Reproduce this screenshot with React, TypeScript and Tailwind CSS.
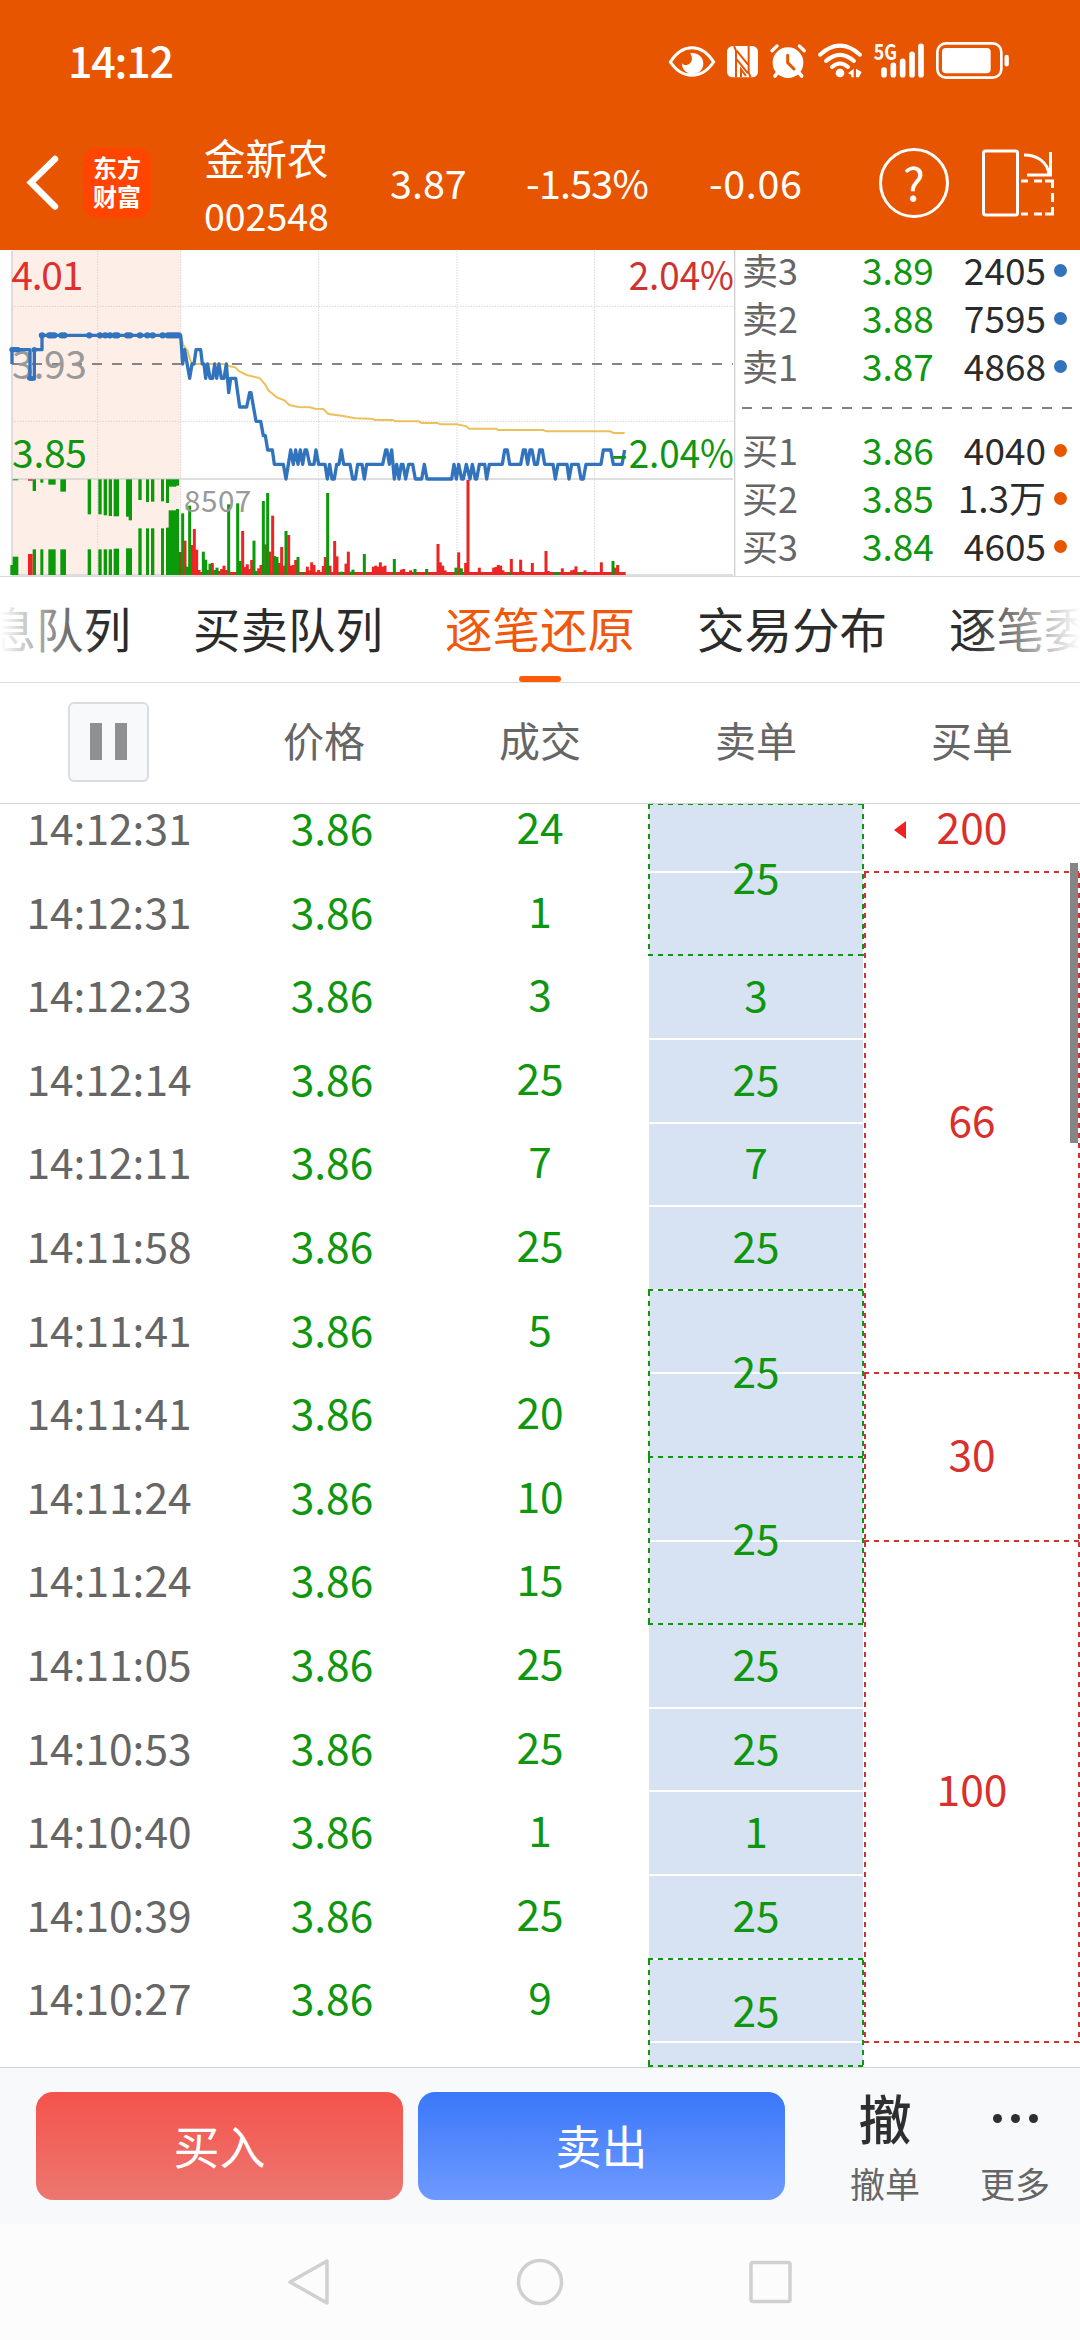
import type { ReactNode } from 'react';

const ROW_HEIGHT = 83.6;
// The list is scrolled, so part of the first and last rows is cut off
const CLIP_TOP = 14.8;
const CLIP_BOTTOM = 59.8;

interface Trade {
  time: string;
  volume: number;
}

interface Order {
  volume: number;
  span: number;
  clipTop?: number;
  clipBottom?: number;
}

interface Quote {
  label: string;
  price: string;
  volume: string;
}

const trades: Trade[] = [
  { time: '14:12:31', volume: 24 },
  { time: '14:12:31', volume: 1 },
  { time: '14:12:23', volume: 3 },
  { time: '14:12:14', volume: 25 },
  { time: '14:12:11', volume: 7 },
  { time: '14:11:58', volume: 25 },
  { time: '14:11:41', volume: 5 },
  { time: '14:11:41', volume: 20 },
  { time: '14:11:24', volume: 10 },
  { time: '14:11:24', volume: 15 },
  { time: '14:11:05', volume: 25 },
  { time: '14:10:53', volume: 25 },
  { time: '14:10:40', volume: 1 },
  { time: '14:10:39', volume: 25 },
  { time: '14:10:27', volume: 9 },
];

const sellOrders: Order[] = [
  { volume: 25, span: 2, clipTop: CLIP_TOP },
  { volume: 3, span: 1 },
  { volume: 25, span: 1 },
  { volume: 7, span: 1 },
  { volume: 25, span: 1 },
  { volume: 25, span: 2 },
  { volume: 25, span: 2 },
  { volume: 25, span: 1 },
  { volume: 25, span: 1 },
  { volume: 1, span: 1 },
  { volume: 25, span: 1 },
  { volume: 25, span: 2, clipBottom: CLIP_BOTTOM },
];

const buyOrders: Order[] = [
  { volume: 66, span: 6 },
  { volume: 30, span: 2 },
  { volume: 100, span: 6 },
];

const asks: Quote[] = [
  { label: '卖3', price: '3.89', volume: '2405' },
  { label: '卖2', price: '3.88', volume: '7595' },
  { label: '卖1', price: '3.87', volume: '4868' },
];

const bids: Quote[] = [
  { label: '买1', price: '3.86', volume: '4040' },
  { label: '买2', price: '3.85', volume: '1.3万' },
  { label: '买3', price: '3.84', volume: '4605' },
];

// Chart data is in thirds of a pixel, matching the viewBox
const GREEN = '#0a9a0a';
const RED = '#ec2524';

const auctionDots = [
  126, 148, 155, 163, 185, 193, 268, 300, 316, 330, 345, 352, 382, 390, 420,
  442, 458, 488, 504, 512, 520, 528, 536,
];

// [x, width, length from the top, height from the bottom]
const auctionBars = [
  [31, 8, 0, 30],
  [38, 17, 3, 55],
  [98, 10, 35, 77],
  [121, 9, 10, 77],
  [145, 22, 16, 77],
  [181, 17, 37, 77],
  [263, 10, 105, 77],
  [295, 10, 105, 77],
  [311, 10, 108, 77],
  [326, 10, 110, 77],
  [341, 16, 111, 79],
  [378, 9, 112, 80],
  [386, 10, 123, 80],
  [415, 10, 62, 140],
  [438, 9, 68, 140],
  [453, 10, 67, 140],
  [483, 9, 66, 140],
  [498, 9, 71, 142],
  [506, 23, 22, 194],
  [528, 9, 19, 198],
];

const redBars = [
  [555, 103], [576, 90], [583, 138], [590, 76], [597, 15], [624, 15],
  [637, 36], [658, 12], [665, 18], [672, 28], [679, 15], [728, 132],
  [735, 24], [742, 32], [749, 18], [755, 45], [776, 20], [783, 30],
  [797, 92], [810, 70], [818, 178], [838, 36], [845, 84], [851, 28],
  [866, 120], [873, 28], [880, 30], [887, 45], [922, 25], [929, 14],
  [935, 38], [942, 30], [956, 15], [970, 27], [976, 54], [990, 28],
  [1004, 102], [1011, 56], [1038, 34], [1045, 70], [1120, 25], [1127, 28],
  [1134, 25], [1141, 38], [1148, 25], [1155, 28], [1204, 16], [1211, 18],
  [1232, 14], [1314, 93], [1321, 38], [1328, 28], [1335, 14], [1376, 68],
  [1397, 36], [1404, 285], [1438, 22], [1481, 22], [1488, 24], [1495, 30],
  [1502, 28], [1509, 14], [1534, 48], [1562, 46], [1569, 12], [1597, 36],
  [1638, 72], [1645, 12], [1687, 20], [1715, 14], [1722, 16], [1728, 26],
  [1755, 14], [1804, 38], [1846, 22], [1853, 30],
];

const greenBars = [
  [548, 185], [562, 25], [569, 208], [610, 70], [617, 46], [630, 34],
  [644, 15], [651, 22], [686, 212], [713, 215], [720, 42], [762, 103],
  [769, 12], [790, 222], [803, 246], [824, 57], [831, 54], [858, 132],
  [894, 54], [908, 8], [983, 246], [1025, 10], [1052, 10], [1059, 16],
  [1093, 63], [1183, 48], [1245, 18], [1280, 18], [1368, 22], [1384, 20],
  [1530, 8], [1665, 8], [1672, 8], [1740, 8], [1839, 42],
];

const pricePath =
  'M36 357V314H90V402H103V314H126V271H542L548 357L554 314L569 400L576 357H582L588 314H602L607 357H612L617 400L623 357L630 400H638L644 357L650 400L657 357L664 400H672L679 357L686 443L692 400H707L719 486H740L749 443H753L768 529H782L790 572H796L803 615H817L823 658H850L858 702L872 615L880 658L887 615L894 658L901 615L908 658L915 615H920L929 658H942L948 615L956 658H975L982 702L989 658L996 702H1003L1010 658H1017L1024 615L1031 658H1050L1058 702H1066L1073 658H1086L1093 702L1100 658H1148L1157 615H1161L1168 658L1175 615L1183 702L1190 658L1197 702L1204 658H1209L1217 702L1226 658H1238L1246 702H1265L1273 658L1281 702H1355L1362 658L1369 702L1376 658L1385 702H1390L1399 658L1410 702L1417 658L1426 702H1430L1438 658H1454L1460 702L1468 658H1507L1514 615H1522L1529 658H1562L1570 615H1576L1583 658L1590 615H1596L1604 658H1612L1619 615H1627L1634 658H1659L1666 702L1674 658H1701L1707 702L1715 658H1735L1743 702H1750L1758 658H1803L1810 615H1832L1840 658H1866L1874 615';

const averagePath =
  'M542 271L550 300L562 316L569 340L576 357H670L690 364L706 367L716 378L740 390L780 400L795 418L805 436L830 457L853 466L868 480L895 486L930 487L945 491L970 492L985 507L1030 513L1065 520L1115 521L1125 525H1178L1185 529H1255L1265 534H1312L1322 538H1370L1400 544L1407 551H1488L1495 555H1630L1638 559H1830L1840 564H1874';

function StatusBar() {
  return (
    <div className="flex h-[116px] items-start justify-between pl-[68px] pr-[60px]">
      <span className="mt-[28px] text-[43px] font-medium leading-[62px] tracking-[-1.2px]">
        14:12
      </span>
      <svg
        className="mt-[30px] h-[60px] w-[360px]"
        viewBox="0 0 1080 180"
        fill="none"
        stroke="#fff"
        strokeLinecap="round"
      >
        {/* Eye comfort */}
        <path d="M31 96C50 66 72 53 96 53S142 66 161 96C142 124 120 136 96 136S50 124 31 96Z" strokeWidth="9" />
        <path d="M90 70A32 32 0 1 1 66 100C68 104 74 106 80 105C92 102 98 92 95 80C94 75 92 72 90 70Z" fill="#fff" stroke="none" />
        {/* NFC */}
        <rect x="201" y="48" width="93" height="94" rx="17" fill="#fff" stroke="none" />
        <path
          d="M222 48L228 62V142M266 48V128L272 142M230 62L264 104M230 88L264 130M243 142V118L258 138"
          stroke="#e85500"
          strokeWidth="6"
          strokeLinecap="butt"
        />
        {/* Alarm */}
        <circle cx="384" cy="98" r="46" fill="#fff" stroke="none" />
        <path d="M336 62L351 48M418 48L433 62" strokeWidth="10" />
        <path d="M354 126L345 138M415 126L425 138" strokeWidth="11" />
        <path d="M383 76V98L402 117" stroke="#e85500" strokeWidth="9" />
        {/* Wifi */}
        <path d="M480 74Q540 20 600 74" strokeWidth="12" />
        <path d="M498 93Q540 56 582 93" strokeWidth="12" />
        <path d="M516 111Q540 90 564 111" strokeWidth="12" />
        <circle cx="540" cy="129" r="13" fill="#fff" stroke="none" />
        <path d="M564 130L581 116V142H574V134ZM588 116L605 126L597 142H588Z" fill="#fff" stroke="none" />
        {/* Signal */}
        <text
          x="641"
          y="91"
          fill="#fff"
          stroke="none"
          className="text-[65px] font-bold"
          textLength="70"
          lengthAdjust="spacingAndGlyphs"
        >
          5G
        </text>
        <path d="M672 120V134M700 106V134M728 94V134M756 73V134M783 49V134" strokeWidth="17" />
        {/* Battery */}
        <rect x="832" y="40" width="192" height="103" rx="26" strokeWidth="8" />
        <rect x="846" y="54" width="146" height="76" rx="12" fill="#fff" stroke="none" />
        <path d="M1040 81V103" strokeWidth="13" />
      </svg>
    </div>
  );
}

function StockHeader() {
  return (
    <div className="flex h-[134px] items-center">
      <svg
        className="ml-[24px] h-[60px] w-[38px] shrink-0"
        viewBox="0 0 38 60"
        fill="none"
        stroke="#fff"
        strokeWidth="6.5"
        strokeLinecap="round"
      >
        <path d="M31 6L7 29.5L31 53.5" />
      </svg>
      <div className="ml-[21px] flex h-[70px] w-[68px] shrink-0 flex-col items-center justify-center rounded-[14px] bg-[#ff4500] pb-[5px] text-[24px] font-bold leading-[29px]">
        <span>东方</span>
        <span>财富</span>
      </div>
      <div className="ml-[53px] flex w-[126px] shrink-0 flex-col pt-[6px]">
        <span className="text-[41.5px] leading-[57px]">金新农</span>
        <span className="text-[37.5px] leading-[58px]">002548</span>
      </div>
      <span className="ml-[60px] w-[136px] shrink-0 pb-[3px] text-[39.5px]">
        3.87
      </span>
      <span className="w-[183px] shrink-0 pb-[3px] text-[39.5px] tracking-[-0.8px]">
        -1.53%
      </span>
      <span className="w-[170px] shrink-0 pb-[3px] text-[39.5px] tracking-[0.6px]">
        -0.06
      </span>
      <div className="flex size-[70px] shrink-0 items-center justify-center rounded-full border-[3px] border-white pb-1 text-[46px]">
        ?
      </div>
      <svg
        className="ml-[33px] h-[70px] w-[74px] shrink-0"
        viewBox="0 0 74 70"
        fill="none"
        stroke="#fff"
        strokeWidth="3"
      >
        <rect x="1.5" y="3" width="34" height="64" rx="2" />
        <path d="M42 7C55 7 66 14 67 27M68.5 4V27H45" />
        <path d="M39 33H46M52 33H60M63 33H70.5V40M70.5 45V54M70.5 59V66H63M60 66H52M46 66H39" />
      </svg>
    </div>
  );
}

function PriceChart() {
  return (
    <svg
      className="h-[326px] w-[736px] shrink-0"
      viewBox="0 15 2208 978"
      fill="none"
    >
      <rect x="36" y="15" width="506" height="975" fill="#fdeee7" />
      {/* Grid */}
      <g stroke="#d4d4d4" strokeWidth="3" strokeDasharray="4 4">
        <path d="M293 18V990M542 18V990M956 18V990M1371 18V990M1784 18V990" />
        <path d="M36 184H2200M36 529H2200" />
      </g>
      <path d="M36 18V990" stroke="#d8d8d8" strokeWidth="5" />
      <path d="M36 702H2199M36 990H2199" stroke="#d4d4d4" strokeWidth="5" />
      <path d="M2204 15V996" stroke="#d0d0d0" strokeWidth="4" />
      <path d="M36 357H2199" stroke="#858585" strokeWidth="6" strokeDasharray="30 30" />

      {/* Volume */}
      {auctionBars.map(([x, width, top, bottom]) => (
        <g key={x} fill={GREEN}>
          <rect x={x} y={703} width={width} height={top} />
          <rect x={x} y={990 - bottom} width={width} height={bottom} />
        </g>
      ))}
      <path d="M84 703H98V707H84ZM84 927H98V990H84Z" fill={RED} />
      <rect x="541" y="981" width="1336" height="9" fill={RED} />
      <rect x="537" y="921" width="9" height="69" fill="#845018" />
      {redBars.map(([x, height]) => (
        <rect key={x} x={x - 4.5} y={990 - height} width="9" height={height} fill={RED} />
      ))}
      {greenBars.map(([x, height]) => (
        <rect key={x} x={x - 4.5} y={990 - height} width="9" height={height} fill={GREEN} />
      ))}

      <g className="text-[117px]">
        <text x="34" y="135" fill="#e02f2d" textLength="216">4.01</text>
        <text x="36" y="402" fill="#999" textLength="225">3.93</text>
        <text x="36" y="668" fill="#0f960f" textLength="225">3.85</text>
      </g>
      <text x="552" y="800" fill="#999" className="text-[89px]" textLength="202">
        8507
      </text>

      <path d={averagePath} stroke="#edc05c" strokeWidth="6" />
      <path d={pricePath} stroke="#3273bd" strokeWidth="10" strokeLinejoin="round" />
      <path d="M36 314H54" stroke="#3273bd" strokeWidth="16" strokeLinecap="round" />
      <path d="M88 400H98" stroke="#3273bd" strokeWidth="14" strokeLinecap="round" />
      <circle cx="103" cy="314" r="8" fill="#3273bd" />
      {auctionDots.map(x => (
        <circle key={x} cx={x} cy="271" r="9.5" fill="#3273bd" />
      ))}

      <g className="text-[117px]">
        <text x="1886" y="135" fill="#cf3331" textLength="316" lengthAdjust="spacingAndGlyphs">
          2.04%
        </text>
        <text x="1832" y="668" fill="#0f960f" textLength="52" lengthAdjust="spacingAndGlyphs">
          -
        </text>
        <text x="1886" y="668" fill="#0f960f" textLength="316" lengthAdjust="spacingAndGlyphs">
          2.04%
        </text>
      </g>
    </svg>
  );
}

function QuoteRow({ quote, dotClass }: { quote: Quote; dotClass: string }) {
  return (
    <div className="flex h-[48px] items-center text-[37px] leading-[48px]">
      <span className="w-[126px] pl-[6px] text-[36px] text-[#666]">
        {quote.label}
      </span>
      <span className="w-[80px] text-[#0f960f]">{quote.price}</span>
      <span className="w-[104px] text-right text-[#2b2b2b]">
        {quote.volume}
      </span>
      <span className={`ml-[8px] mt-[2px] size-[13px] rounded-full ${dotClass}`} />
    </div>
  );
}

function OrderBook() {
  return (
    <div className="flex-1 overflow-hidden">
      <div className="-mt-[5px]">
        {asks.map(quote => (
          <QuoteRow key={quote.label} quote={quote} dotClass="bg-[#3273bd]" />
        ))}
      </div>
      <div className="ml-[6px] mr-[2px] mt-[18px] h-[2px] bg-[repeating-linear-gradient(90deg,#808080_0_10px,transparent_10px_20px)]" />
      <div className="mt-[16px]">
        {bids.map(quote => (
          <QuoteRow key={quote.label} quote={quote} dotClass="bg-[#e85500]" />
        ))}
      </div>
    </div>
  );
}

function Tabs() {
  return (
    <div className="relative flex h-[106px] items-center justify-center gap-[62px] overflow-hidden whitespace-nowrap border-b border-[#dcdde0] pb-[4px] text-[47.5px] leading-[70px] text-[#2b2b2b]">
      <span>消息队列</span>
      <span>买卖队列</span>
      <span className="text-[#f0580c]">逐笔还原</span>
      <span>交易分布</span>
      <span>逐笔委托</span>
      <div className="absolute bottom-0 h-[6px] w-[42px] rounded-[3px] bg-[#ff5a08]" />
      <div className="absolute inset-y-0 left-0 w-[100px] bg-linear-to-r from-white to-transparent" />
      <div className="absolute inset-y-0 right-0 w-[110px] bg-linear-to-l from-white to-transparent" />
    </div>
  );
}

function ColumnHeader() {
  return (
    <div className="grid h-[121px] grid-cols-5 items-center border-b border-[#d3d4d6] pb-[3px] text-center text-[41px] text-[#666]">
      <div className="mx-auto flex h-[80px] w-[81px] items-center justify-center gap-[13px] rounded-md border-2 border-[#d9dce0] bg-[#f7f9fb]">
        <span className="h-[37px] w-[12px] bg-[#8f9092]" />
        <span className="h-[37px] w-[12px] bg-[#8f9092]" />
      </div>
      <span className="pb-[3px]">价格</span>
      <span className="pb-[3px]">成交</span>
      <span className="pb-[3px]">卖单</span>
      <span className="pb-[3px]">买单</span>
    </div>
  );
}

function SellDashes({ clipped }: { clipped: boolean }) {
  return (
    <>
      <div
        className={`absolute inset-x-0 h-[2px] bg-[repeating-linear-gradient(90deg,#0f960f_0_5px,transparent_5px_10px)] ${clipped ? '-top-px' : '-top-[2px]'}`}
      />
      <div className="absolute inset-x-0 bottom-0 h-[2px] bg-[repeating-linear-gradient(90deg,#0f960f_0_5px,transparent_5px_10px)]" />
      <div className="absolute inset-y-0 left-0 w-[2px] bg-[repeating-linear-gradient(180deg,#0f960f_0_5px,transparent_5px_10px)]" />
      <div className="absolute inset-y-0 right-0 w-[2px] bg-[repeating-linear-gradient(180deg,#0f960f_0_5px,transparent_5px_10px)]" />
    </>
  );
}

function BuyDashes() {
  return (
    <>
      <div className="absolute inset-x-0 -top-[2px] h-[2px] bg-[repeating-linear-gradient(90deg,#cf3331_0_5px,transparent_5px_10px)]" />
      <div className="absolute inset-x-0 bottom-0 h-[2px] bg-[repeating-linear-gradient(90deg,#cf3331_0_5px,transparent_5px_10px)]" />
      <div className="absolute inset-y-0 left-0 w-[2px] bg-[repeating-linear-gradient(180deg,#cf3331_0_5px,transparent_5px_10px)]" />
      <div className="absolute inset-y-0 right-0 w-[2px] bg-[repeating-linear-gradient(180deg,#cf3331_0_5px,transparent_5px_10px)]" />
    </>
  );
}

function SellCell({ order }: { order: Order }) {
  const { volume, span, clipTop = 0, clipBottom = 0 } = order;
  const height = span * ROW_HEIGHT - clipTop - clipBottom;

  if (span === 1) {
    return (
      <div
        className="mx-px flex items-center justify-center border-b-2 border-white bg-[#d7e3f2] pb-[6px]"
        style={{ height }}
      >
        {volume}
      </div>
    );
  }

  return (
    <div
      className="relative flex items-center justify-center pb-[9px]"
      style={{ height }}
    >
      <div className="absolute inset-x-px inset-y-0 bg-[#d7e3f2]" />
      <div
        className="absolute inset-x-px h-[2px] bg-white"
        style={{ top: ROW_HEIGHT - clipTop - 2 }}
      />
      <SellDashes clipped={clipTop > 0} />
      <span className="relative">{volume}</span>
    </div>
  );
}

function TradeList() {
  return (
    <div className="relative flex h-[1263px] overflow-hidden text-[42.5px] leading-[60px] text-[#0f960f]">
      <div className="-mt-[14.8px] w-[648px]">
        {trades.map((trade, index) => (
          <div
            key={index}
            className="grid h-[83.6px] grid-cols-3 items-center pb-[8px] text-center"
          >
            <span className="pl-[2px] text-[#666]">{trade.time}</span>
            <span className="pl-[16px]">3.86</span>
            <span className="pb-[2px]">{trade.volume}</span>
          </div>
        ))}
      </div>

      <div className="w-[216px]">
        {sellOrders.map((order, index) => (
          <SellCell key={index} order={order} />
        ))}
      </div>

      <div className="w-[216px] text-[#d92f2d]">
        <div className="relative flex h-[68.8px] items-start justify-center">
          <svg
            className="absolute left-[30px] top-[17px] h-[18px] w-[12px]"
            viewBox="0 0 12 18"
            fill="#f02020"
          >
            <path d="M12 0V18L0 9Z" />
          </svg>
          <span className="-mt-[8px]">200</span>
        </div>
        {buyOrders.map(order => (
          <div
            key={order.volume}
            className="relative flex items-center justify-center pb-[9px]"
            style={{ height: order.span * ROW_HEIGHT }}
          >
            <BuyDashes />
            {order.volume}
          </div>
        ))}
      </div>

      <div className="absolute right-[2px] top-[59px] h-[280px] w-[8px] bg-[#858585]" />
    </div>
  );
}

function Action({ icon, label }: { icon: ReactNode; label: string }) {
  return (
    <div className="flex w-[130px] flex-col items-center">
      <div className="flex h-[56px] items-center text-[53px] font-medium leading-[56px] text-[#2f2f2f]">
        {icon}
      </div>
      <span className="mt-[14px] text-[35px] leading-[48px] text-[#666]">
        {label}
      </span>
    </div>
  );
}

function ActionBar() {
  return (
    <div className="flex h-[157px] border-t border-[#d3d5d8] bg-[#f7f9fb] pl-[36px]">
      <button className="mt-[24px] h-[108px] w-[367px] rounded-[17px] bg-linear-to-b from-[#f4524b] to-[#ec7670] pb-[3px] text-[46px] text-white">
        买入
      </button>
      <button className="ml-[15px] mt-[24px] h-[108px] w-[367px] rounded-[17px] bg-linear-to-b from-[#3a77f9] to-[#6e9aff] pb-[3px] text-[46px] text-white">
        卖出
      </button>
      <div className="ml-[35px] mt-[21px] flex">
        <Action icon="撤" label="撤单" />
        <Action
          icon={
            <div className="flex gap-[9px] pt-[2px]">
              <span className="size-[9px] rounded-full bg-[#2f2f2f]" />
              <span className="size-[9px] rounded-full bg-[#2f2f2f]" />
              <span className="size-[9px] rounded-full bg-[#2f2f2f]" />
            </div>
          }
          label="更多"
        />
      </div>
    </div>
  );
}

function NavigationBar() {
  return (
    <div className="flex h-[116px] items-center justify-center gap-[183px] bg-[#fcfcfc]">
      <svg className="size-[48px]" viewBox="0 0 48 48" fill="none" stroke="#d0d0d0" strokeWidth="3.5" strokeLinejoin="round">
        <path d="M42 3V45L5 24Z" />
      </svg>
      <svg className="size-[48px]" viewBox="0 0 48 48" fill="none" stroke="#d0d0d0" strokeWidth="3.5">
        <circle cx="24" cy="24" r="21.5" />
      </svg>
      <svg className="size-[48px]" viewBox="0 0 48 48" fill="none" stroke="#d0d0d0" strokeWidth="3.5">
        <rect x="4" y="4.5" width="39" height="39" rx="2" />
      </svg>
    </div>
  );
}

export default function App() {
  return (
    <div className="flex h-[2340px] w-[1080px] flex-col overflow-hidden bg-white font-['Noto_Sans_CJK_SC',sans-serif]">
      <header className="h-[250px] bg-[#e85500] text-white">
        <StatusBar />
        <StockHeader />
      </header>
      <section className="flex h-[327px] border-b border-[#d8d8d8]">
        <PriceChart />
        <OrderBook />
      </section>
      <Tabs />
      <ColumnHeader />
      <TradeList />
      <ActionBar />
      <NavigationBar />
    </div>
  );
}
